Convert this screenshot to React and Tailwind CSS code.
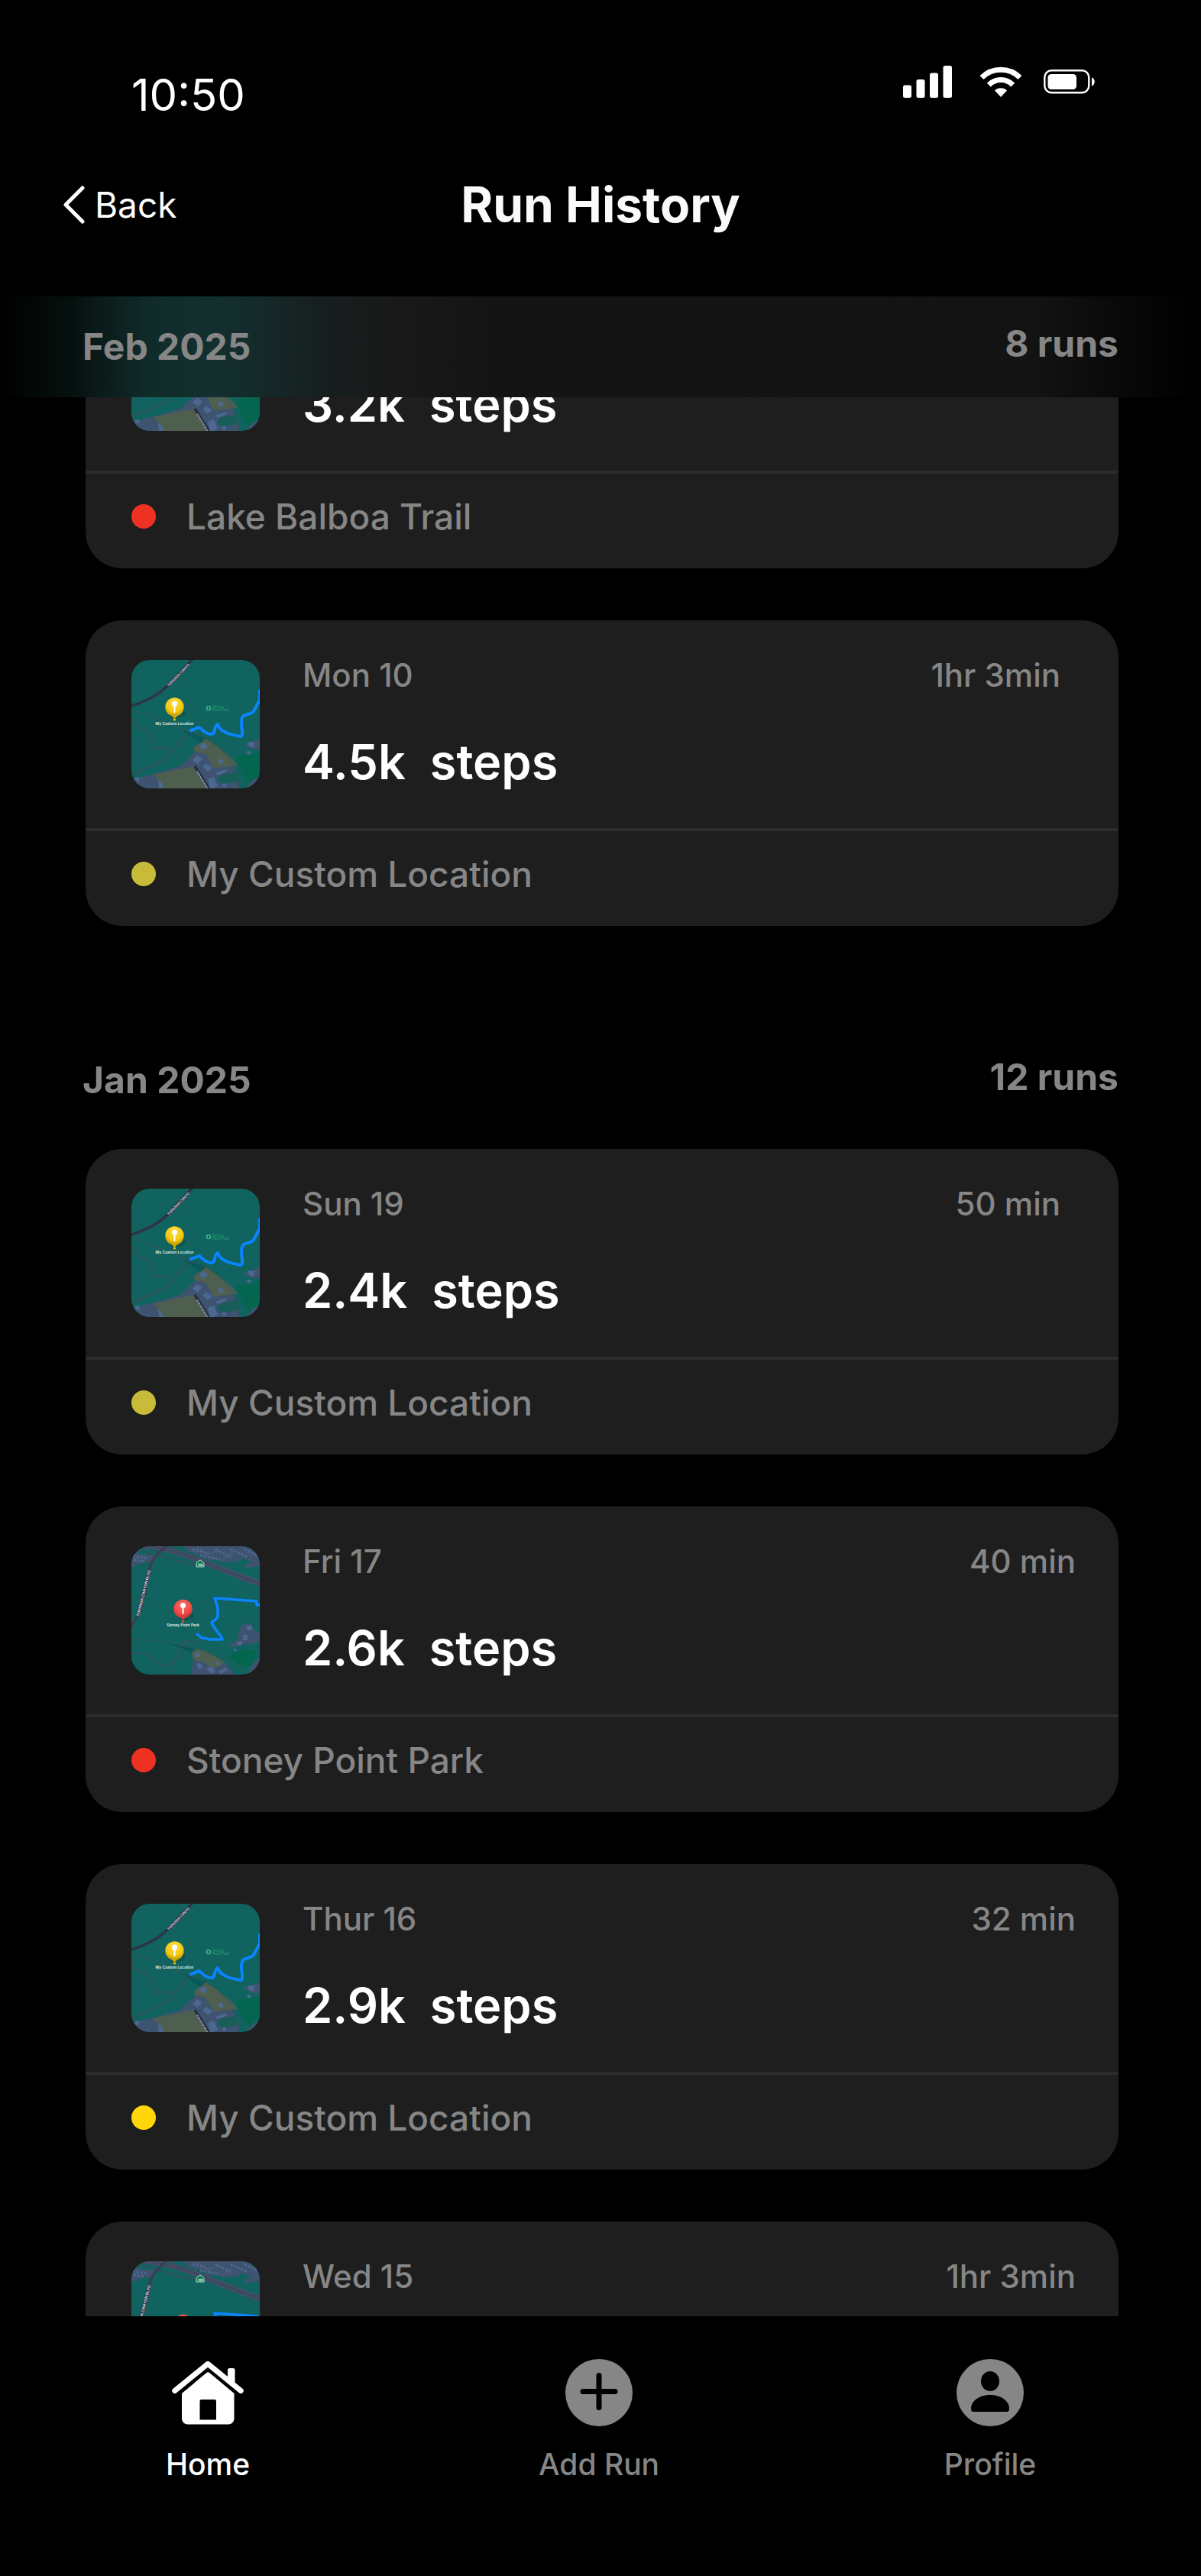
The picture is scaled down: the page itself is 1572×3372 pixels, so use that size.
// src/App.jsx
const SECTIONS = [
  {
    month: 'Feb 2025',
    total: '8 runs',
    scrolled: true,
    runs: [
      { id: 1, steps: '3.2k', place: 'Lake Balboa Trail', dot: 'bg-[#ef3124]', map: 'custom' },
      { id: 2, day: 'Mon 10', time: '1hr 3min', steps: '4.5k', place: 'My Custom Location', dot: 'bg-[#c9bb3a]', map: 'custom', inset: true },
    ],
  },
  {
    month: 'Jan 2025',
    total: '12 runs',
    runs: [
      { id: 3, day: 'Sun 19', time: '50 min', steps: '2.4k', place: 'My Custom Location', dot: 'bg-[#c9bb3a]', map: 'custom', inset: true },
      { id: 4, day: 'Fri 17', time: '40 min', steps: '2.6k', place: 'Stoney Point Park', dot: 'bg-[#ef3124]', map: 'park' },
      { id: 5, day: 'Thur 16', time: '32 min', steps: '2.9k', place: 'My Custom Location', dot: 'bg-[#ffd60a]', map: 'custom' },
      { id: 6, day: 'Wed 15', time: '1hr 3min', map: 'park' },
    ],
  },
];

const TABS = [
  { label: 'Home', icon: HomeIcon, active: true },
  { label: 'Add Run', icon: AddIcon },
  { label: 'Profile', icon: ProfileIcon },
];

function SignalIcon() {
  return (
    <svg width="64" height="42" viewBox="0 0 64 42" fill="currentColor" className="mr-2" aria-hidden="true">
      <rect x="0" y="25.5" width="11" height="16.5" rx="2.5" />
      <rect x="17.5" y="18" width="11" height="24" rx="2.5" />
      <rect x="35" y="9.5" width="11" height="32.5" rx="2.5" />
      <rect x="52.5" y="0" width="11.5" height="42" rx="2.5" />
    </svg>
  );
}

function WifiIcon() {
  return (
    <svg width="56" height="42" viewBox="0 0 56 42" fill="none" stroke="currentColor" strokeWidth="7" aria-hidden="true">
      <path d="M3 15.5a35.5 35.5 0 0 1 50 0" />
      <path d="M12.3 25.2a22 22 0 0 1 31.4 0" />
      <path d="M20 32.5a11.5 11.5 0 0 1 16 0L28 41Z" fill="currentColor" stroke="none" />
    </svg>
  );
}

function BatteryIcon() {
  return (
    <svg width="68" height="32" viewBox="0 0 68 32" fill="currentColor" aria-hidden="true">
      <rect x="1.3" y="1.3" width="58" height="29" rx="9" fill="none" stroke="currentColor" strokeWidth="2.4" />
      <rect x="5.5" y="6" width="37.5" height="20" rx="4.5" />
      <path d="M63 10.5c5 1.5 5 9.5 0 11Z" />
    </svg>
  );
}

function HomeIcon() {
  return (
    <svg width="96" height="88" viewBox="0 0 96 88" fill="currentColor" aria-hidden="true">
      <path
        d="M4.8 41.5 48 6.3l43.2 35.2"
        fill="none"
        stroke="currentColor"
        strokeWidth="7"
        strokeLinecap="round"
        strokeLinejoin="round"
      />
      <path d="M74 14.5a2.5 2.5 0 0 1 2.5-2.5H81a2.5 2.5 0 0 1 2.5 2.5v20L74 26Z" />
      <path
        fillRule="evenodd"
        d="M46 18.2a3.500 3.500 0 0 1 4.500 0L82.500 45v33a7.500 7.500 0 0 1-7.500 7.500H21.500A7.500 7.500 0 0 1 14 78V45ZM39.500 53a2 2 0 0 0-2 2v24.500H59V55a2 2 0 0 0-2-2Z"
      />
    </svg>
  );
}

function AddIcon() {
  return (
    <svg width="88" height="88" viewBox="0 0 88 88" aria-hidden="true">
      <circle cx="44" cy="44" r="44" fill="currentColor" />
      <path d="M44 21.5v42M23 42.5h42" stroke="#000" strokeWidth="7" strokeLinecap="round" />
    </svg>
  );
}

function ProfileIcon() {
  return (
    <svg width="88" height="88" viewBox="0 0 88 88" aria-hidden="true">
      <circle cx="44" cy="44" r="44" fill="currentColor" />
      <ellipse cx="44" cy="29" rx="12" ry="13" />
      <path d="M19 65c0-11 12-18 25-18s25 7 25 18c0 2.5-1 4-3 4H22c-2 0-3-1.5-3-4Z" />
    </svg>
  );
}

function CustomMap() {
  return (
    <svg viewBox="0 0 168 168" className="size-[168px] rounded-3xl" role="img" aria-label="Route map">
      <defs>
        <radialGradient id="pin-yellow" cx="0.5" cy="0.3" r="0.75">
          <stop offset="0" stopColor="#ffe14a" />
          <stop offset="0.6" stopColor="#f2c80f" />
          <stop offset="1" stopColor="#b58f00" />
        </radialGradient>
      </defs>
      <rect width="168" height="168" fill="#10635f" />
      {/* housing blocks */}
      <path d="M0 156 30 149 64 139 84 120 82 114 97 102 122 122 136 146 141 168H0Z" fill="#3e536f" />
      <path d="M82 115 97 103Q130 124 139 138L107 141 99 124 82 119Z" fill="#4f5f4f" />
      <path d="M29 150 82 139 98 168H40L37 160Z" fill="#4f5f4f" />
      <path d="M115 151 138 146 141 158 120 163 112 158Z" fill="#175e58" />
      <path d="M65 91 98 102 90 109Z" fill="#07595a" />
      <path
        d="m89 112 6-4 5 5-6 5ZM80 131l6-6 7 4-6 7ZM93 140l5-5 8 6-6 5ZM113 131l5-2 3 5-5 3ZM110 148l13-5 2 3-12 5ZM100 156l8-3 5 12-6 3h-4ZM118 163l4-2 3 4-4 2ZM35 158l5 3 2 7h-6ZM5 153l6 1-1 5-5-1Z"
        fill="#4c6892"
      />
      {/* park edge */}
      <path d="M137 127 168 122v30l-15 9-10-17Z" fill="#04664f" />
      <path d="m147 110 21-7v15l-13-2Z" fill="#3e536f" />
      <path d="m153 107 9 1-3 7-6-3ZM152 119l5 1-2 4-4-2Z" fill="#4c6892" />
      <path d="M151 168c3-7 8-12 17-16v16Z" fill="#3e536f" />
      {/* roads and trails */}
      <path d="M0 60Q32 50 48 33L80-1" fill="none" stroke="#2e3446" strokeWidth="3.5" />
      <path d="M0 64 97 102Q140 128 141 168" fill="none" stroke="#3a5557" strokeWidth="1" />
      <path
        d="M0 76q5 3 5 9c6 6 14 3 20 14 6 9 3 14 6 17 5 1 10-4 18 2M78 92 65 106C50 120 55 127 35 134L0 150"
        fill="none"
        stroke="#3c4a5c"
        strokeWidth="1.5"
      />
      <path d="m83 139 18 29" stroke="#2b3044" strokeWidth="4" />
      <path d="m86 146 14 23" stroke="#a9afbd" strokeWidth="2" strokeDasharray="1.5 1" />
      <text transform="translate(49 35) rotate(-46)" fontSize="4.5" fontWeight="600" fill="#d5d9e4" stroke="#2e3446" strokeWidth="1.5" paintOrder="stroke">
        TOPANGA CANYO
      </text>
      {/* park label */}
      <circle cx="101" cy="63" r="3.2" fill="#35b88a" />
      <path d="M101 61v4M99.5 63h3" stroke="#0b3a38" strokeWidth="1" />
      <text fontSize="4.5" fill="#2fa374">
        <tspan x="106" y="62.5">Stoney</tspan>
        <tspan x="106" y="67">Point Park</tspan>
      </text>
      <path
        d="m78 92 11-4c4 3 7 9 16 9 6 0 2-10 8-13 2 7 7 9 11 11 7 3 13 4 19 5 6-1-3-19 3-26 4-4 10-2 14-7l8-15V40"
        fill="none"
        stroke="#0a84ff"
        strokeWidth="4"
        strokeLinejoin="round"
        strokeLinecap="round"
      />
      {/* pin */}
      <ellipse cx="60" cy="69" rx="11" ry="7" fill="#0a4a47" opacity="0.5" />
      <circle cx="56.5" cy="61.5" r="12.2" fill="url(#pin-yellow)" />
      <path d="m53 73 3.5 4 3.5-4Z" fill="#d3a700" />
      <circle cx="56.5" cy="57" r="3.5" fill="#fff" />
      <path d="M56.5 57v11" stroke="#fff" strokeWidth="2" strokeLinecap="round" />
      <circle cx="56.5" cy="78" r="1.5" fill="#f5c90d" />
      <text x="56.5" y="85" textAnchor="middle" fontSize="5" fontWeight="600" fill="#e6efef">My Custom Location</text>
    </svg>
  );
}

function ParkMap() {
  return (
    <svg viewBox="0 0 168 168" className="size-[168px] rounded-3xl" role="img" aria-label="Route map">
      <defs>
        <radialGradient id="pin-red" cx="0.5" cy="0.3" r="0.75">
          <stop offset="0" stopColor="#ff6a62" />
          <stop offset="0.6" stopColor="#f04a43" />
          <stop offset="1" stopColor="#b8322d" />
        </radialGradient>
      </defs>
      <rect width="168" height="168" fill="#10635f" />
      {/* built-up areas */}
      <path d="M0 8 33 13 26 20 10 23 0 28Z" fill="#3e536f" />
      <path d="M67 0h101v26l-20 3 2-6 9-2-14-5-7 4-16 1-12-3-7 1-14-7-14-5Z" fill="#3e536f" />
      <path d="m2 13 20 3M3 18l14 2M80 4l20 5M90 12l26 5M110 4l20 10M130 4l22 10M148 4l18 9" stroke="#4c6892" strokeWidth="3" strokeDasharray="3 2" />
      <path d="M85 2c8 0 8 8 16 8s8-6 15-3M120 20c0-8 9-6 12-11" fill="none" stroke="#5c6678" strokeWidth="1" />
      <path d="M126 130c6-5 12-3 14-12-1-12 6-18 14-17 6 1 4 9 10 11l4 1v13l-22 3-12 3Z" fill="#3e536f" />
      <path d="m150 105 6-2 3 5-6 3ZM146 116h6v7h-6ZM138 125l7-1v5l-6 1ZM134 135l3-1 1 3h-4Z" fill="#4c6892" />
      <path d="m125 146 18-11 20 2-4 20-12 1Z" fill="#04664f" />
      <path d="M152 168c4-10 8-18 16-22v22Z" fill="#3e536f" />
      <path d="M80 136 122 152 136 168H78L81 150Z" fill="#3e536f" />
      <path d="M85 134Q110 142 123 153L107 160 94 151 81 149 79 140Z" fill="#4f5f4f" />
      <path d="m83 140 6-2 1 6-5 2ZM85 154l5-1 4 5-6 3ZM98 160l6-3 6 6-6 4ZM110 152l4-1 3 4-4 1ZM114 164l9-5 3 3-9 5Z" fill="#4c6892" />
      <path d="M43 125 85 134 78 139Z" fill="#07595a" />
      {/* freeway */}
      <path d="M15 0C70 4 110 30 168 49" fill="none" stroke="#3b4a63" strokeWidth="7" />
      <path d="M12 1C70 7 110 33 168 52M26-1C76 5 112 27 168 45" fill="none" stroke="#56536a" strokeWidth="1" />
      <path d="M8 5C40 12 60 20 84 24M48 0l42 17" fill="none" stroke="#44485c" strokeWidth="1.2" />
      {/* surface road */}
      <path d="M46-1 31 14Q23 24 21 45L12 82 0 106" fill="none" stroke="#3a3e52" strokeWidth="3.5" />
      <text transform="translate(10 92) rotate(-76)" fontSize="5" fontWeight="600" fill="#d5d9e4" stroke="#2e3446" strokeWidth="1.5" paintOrder="stroke">
        TOPANGA CANYON BLVD
      </text>
      <path d="M0 122q45 1 85 12 45 8 66 34" fill="none" stroke="#355a58" strokeWidth="1" />
      <path d="M0 139c10 2 18-3 28 8s10 12 24 6M89 120c0 12-14 5-19 4-11 12-8 20-13 25-2 8-4 13-5 19" fill="none" stroke="#3f5063" strokeWidth="1.5" />
      {/* route shield */}
      <path d="M85 27v-4c0-2 3-4 5-5 2 1 5 3 5 5v4Z" fill="#12805a" stroke="#b9e2d0" strokeWidth="1" />
      <text x="90" y="26" textAnchor="middle" fontSize="4" fontWeight="700" fill="#fff">118</text>
      <path
        d="m86 115 6 5 7 1 3 1h17c0-4-10-12-14-22 2-4 9-3 8-12 1-10-2-12-4-20l55 4v5h4"
        fill="none"
        stroke="#0a84ff"
        strokeWidth="3.5"
        strokeLinejoin="round"
        strokeLinecap="round"
      />
      {/* pin */}
      <ellipse cx="71" cy="90" rx="11" ry="7" fill="#0a4a47" opacity="0.5" />
      <circle cx="67.5" cy="82" r="12.2" fill="url(#pin-red)" />
      <path d="m64 93 3.5 4 3.5-4Z" fill="#d23c36" />
      <circle cx="67.5" cy="77.5" r="3.5" fill="#fff" />
      <path d="M67.5 78v10" stroke="#fff" strokeWidth="2" strokeLinecap="round" />
      <circle cx="67.5" cy="98.5" r="1.5" fill="#f04a43" />
      <text x="67.5" y="105" textAnchor="middle" fontSize="5" fontWeight="600" fill="#e6efef">Stoney Point Park</text>
    </svg>
  );
}

function RunCard({ run }) {
  return (
    <article className="rounded-[48px] bg-[#1e1e1e] overflow-hidden">
      <div className={`flex gap-14 py-[52px] pl-[60px] ${run.inset ? 'pr-[76px]' : 'pr-14'}`}>
        <div className="shrink-0">{run.map === 'park' ? <ParkMap /> : <CustomMap />}</div>
        <div className="flex-1 flex flex-col">
          {run.day && (
            <div className="flex justify-between text-[42px] leading-[40px] font-medium text-[#868686]">
              <span>{run.day}</span>
              <span>{run.time}</span>
            </div>
          )}
          {run.steps && (
            <div className="mt-auto flex gap-8 text-[63px] leading-[70px] font-semibold text-white">
              <span>{run.steps}</span>
              <span>steps</span>
            </div>
          )}
        </div>
      </div>
      {run.place && (
        <div className="h-32 border-t-4 border-[#2c2c2c] pl-[60px] pb-3 flex items-center gap-10">
          <span className={`size-8 rounded-full ${run.dot}`} />
          <span className="text-[46px] leading-[56px] font-medium text-[#868686]">{run.place}</span>
        </div>
      )}
    </article>
  );
}

function MonthHeader({ month, total, scrolled }) {
  return (
    <header
      className={`sticky top-0 z-10 h-[132px] px-[108px] flex items-center justify-between text-[48px] leading-[56px] font-bold text-[#868686] ${
        scrolled
          ? 'bg-[linear-gradient(90deg,#000_0%,#06110f_6%,#0f2a29_12%,#12302f_17%,#142b2b_21%,#171e1e_27%,#191919_33%,#141414_41%,#131313_86%,#090909_93%,#000_100%)]'
          : ''
      }`}
    >
      <h2>{month}</h2>
      <span className="pb-2">{total}</span>
    </header>
  );
}

export default function App() {
  return (
    <div className="h-screen flex flex-col bg-black text-white font-['Inter',sans-serif]">
      {/* Status bar */}
      <div className="flex items-start justify-between pt-[86px] pl-[172px] pr-[138px]">
        <time className="text-[58px] leading-[76px]">10:50</time>
        <div className="flex items-center gap-7">
          <SignalIcon />
          <WifiIcon />
          <BatteryIcon />
        </div>
      </div>

      {/* Title bar */}
      <div className="grid grid-cols-3 items-center pt-[66px] pb-20 px-20">
        <a href="#back" className="flex items-center gap-3 text-[46px] leading-[56px]">
          <svg width="32" height="52" viewBox="0 0 32 52" fill="none" stroke="currentColor" strokeWidth="5" strokeLinecap="round" strokeLinejoin="round" aria-hidden="true">
            <path d="M28 4 6 26l22 22" />
          </svg>
          Back
        </a>
        <h1 className="text-center text-[64px] leading-[80px] font-bold text-[#fafafa]">Run History</h1>
      </div>

      {/* Runs */}
      <main className="flex-1 min-h-0 overflow-hidden">
        {SECTIONS.map(s => (
          <section key={s.month} className="pb-[136px]">
            <MonthHeader month={s.month} total={s.total} scrolled={s.scrolled} />
            <div className={`flex flex-col gap-[68px] pl-[112px] pr-[108px] ${s.scrolled ? '-mt-[176px]' : 'mt-6'}`}>
              {s.runs.map(run => <RunCard key={run.id} run={run} />)}
            </div>
          </section>
        ))}
      </main>

      {/* Tab bar */}
      <nav className="grid grid-cols-3 pt-14 pb-[122px] pl-4 pr-5 bg-black">
        {TABS.map(({ label, icon: Icon, active }) => (
          <a
            key={label}
            href="#tab"
            className={`flex flex-col items-center gap-[26px] text-[39px] leading-[48px] font-medium ${active ? 'text-white' : 'text-[#868686]'}`}
          >
            <Icon />
            {label}
          </a>
        ))}
      </nav>
    </div>
  );
}
